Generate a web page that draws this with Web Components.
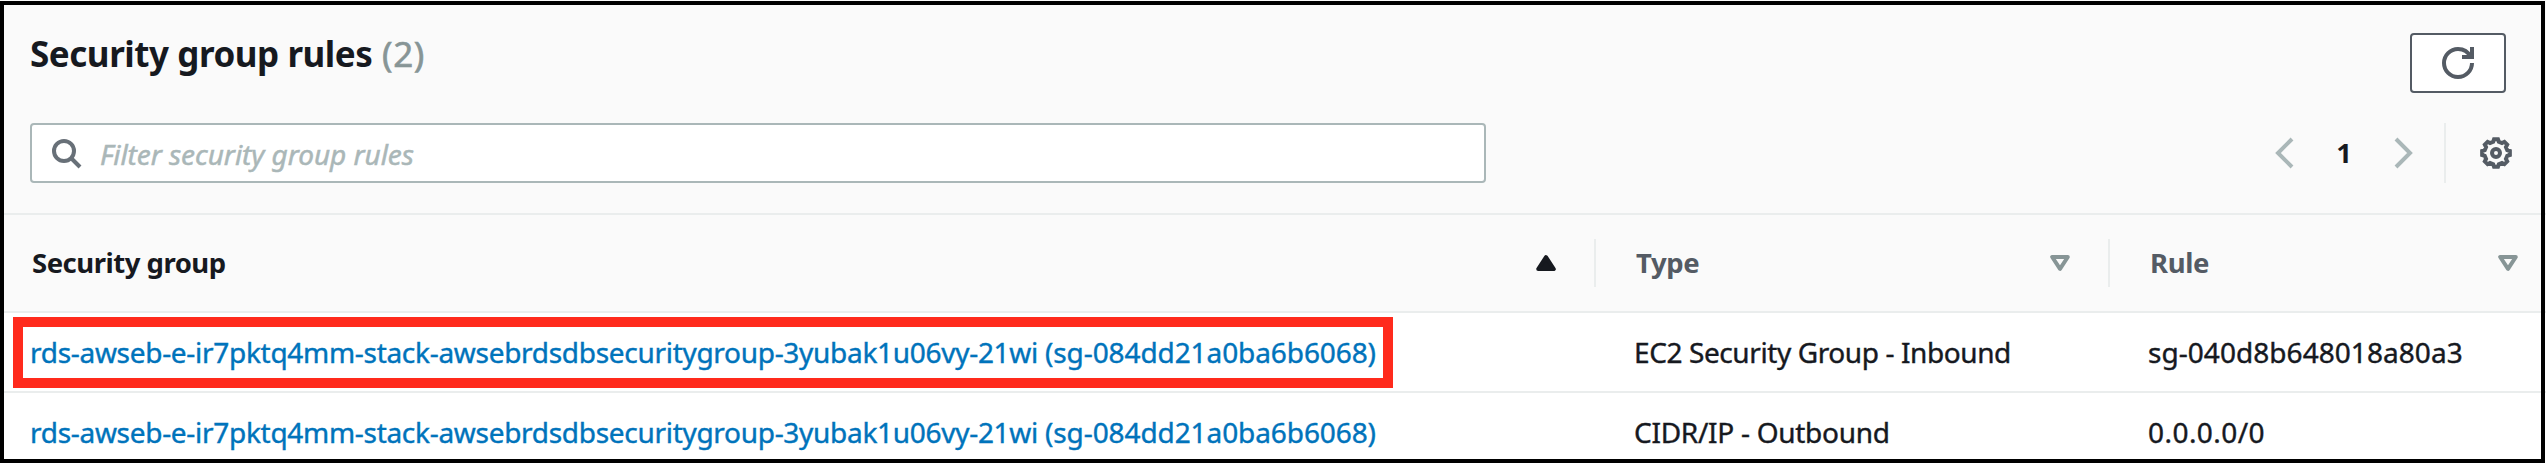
<!DOCTYPE html>
<html lang="en">
<head>
<meta charset="utf-8">
<title>Security group rules</title>
<style>
html,body{margin:0;height:100%}
body{position:relative;height:464px;overflow:hidden;background:#fff;color:#16191f;font:400 28px/34px "Noto Sans","Open Sans",sans-serif}
</style>
</head>
<body>
<rules-panel></rules-panel>
<outline-frame></outline-frame>

<script>
function define(name, html, setup) {
  const t = document.createElement('template');
  t.innerHTML = html;
  customElements.define(name, class extends HTMLElement {
    constructor() {
      super();
      this.attachShadow({mode: 'open'}).append(t.content.cloneNode(true));
    }
    connectedCallback() { if (setup) setup.call(this, this.shadowRoot); }
  });
}

/* Eight-toothed cog outline on a 16-unit grid */
function cog() {
  const p = (deg, r) => {
    const a = deg * Math.PI / 180;
    return (8 + r * Math.cos(a)).toFixed(2) + ' ' + (8 + r * Math.sin(a)).toFixed(2);
  };
  let pts = [];
  for (let k = 0; k < 360; k += 45) pts.push(p(k - 8, 7), p(k + 8, 7), p(k + 14, 5.8), p(k + 31, 5.8));
  return 'M' + pts.join('L') + 'Z';
}

const ICONS = {
  search: ['0 0 32 32', 32, 32, '<circle cx="14" cy="14" r="10" stroke-width="4"/><path d="M21 21l9 9" stroke-width="4"/>'],
  refresh: ['0 0 16 16', 32, 32, '<path d="M15 8c0 3.87-3.13 7-7 7s-7-3.13-7-7 3.13-7 7-7c2.79 0 5.2 1.63 6.33 4" stroke-width="2"/><path d="M10 5h5V0" stroke-width="2"/>'],
  previous: ['0 0 16 16', 32, 32, '<path d="M11 1L4 8l7 7" stroke-width="2"/>'],
  next: ['0 0 16 16', 32, 32, '<path d="M5 1l7 7-7 7" stroke-width="2"/>'],
  settings: ['0 0 16 16', 32, 32, '<path d="' + cog() + '" stroke-width="2"/><circle cx="8" cy="8" r="2" stroke-width="2"/>'],
  asc: ['0 0 20 16', 20, 16, '<path d="M10 2.2L17.8 14H2.2Z" fill="currentColor" stroke-width="4" stroke-linejoin="round"/>'],
  sortable: ['0 0 20 16', 20, 16, '<path d="M2.2 2H17.8L10 13.8Z" stroke-width="4" stroke-linejoin="round"/>']
};
define('ui-icon', '<style>:host{display:block;flex:none}svg{display:block}</style>', function (root) {
  const [box, w, h, body] = ICONS[this.getAttribute('name')];
  root.innerHTML += `<svg width="${w}" height="${h}" viewBox="${box}" fill="none" stroke="currentColor">${body}</svg>`;
});

define('icon-button', `<style>
:host{display:block;color:#545b64}
button{box-sizing:border-box;display:flex;align-items:center;justify-content:center;width:96px;height:60px;padding:0;background:#fff;border:2px solid #545b64;border-radius:4px;color:inherit}
</style><button aria-label="Refresh"><slot></slot></button>`);

define('filter-field', `<style>
:host{box-sizing:border-box;display:flex;align-items:center;width:1456px;height:60px;padding-left:18px;background:#fff;border:2px solid #aab7b8;border-radius:4px;color:#aab7b8}
ui-icon{color:#687078}
.hint{padding:1px 0 0 18px;font-style:italic;letter-spacing:-.06px;-webkit-text-stroke:.5px currentColor}
</style><ui-icon name="search"></ui-icon><span class="hint"><slot></slot></span>`);

define('page-controls', `<style>
:host{display:flex;align-items:center;height:60px;color:#aab7b8}
b{box-sizing:border-box;width:84px;text-align:center;color:#16191f;font-size:27.5px}
i{width:2px;height:60px;margin:0 34px 0 26px;background:#eaeded}
ui-icon[name=settings]{color:#545b64}
</style><ui-icon name="previous"></ui-icon><b>1</b><ui-icon name="next"></ui-icon><i></i><ui-icon name="settings"></ui-icon>`);

define('panel-header', `<style>
:host{box-sizing:border-box;display:flex;flex-direction:column;height:215px;padding:33px 34px 0 30px;background:#fafafa;border-bottom:2px solid #eaeded}
.top,.bar{display:flex;justify-content:space-between}
.top{height:90px;padding-right:6px}
h2{margin:0;font-size:35px;line-height:42px;font-weight:700;letter-spacing:-.46px;white-space:nowrap}
h2 span{font-weight:400;color:#879596;letter-spacing:.6px;margin-left:1px;-webkit-text-stroke:.6px currentColor}
</style>
<div class="top"><h2>Security group rules <span>(2)</span></h2><icon-button><ui-icon name="refresh"></ui-icon></icon-button></div>
<div class="bar"><filter-field>Filter security group rules</filter-field><page-controls></page-controls></div>`);

define('column-heading', `<style>
:host{box-sizing:border-box;display:flex;align-items:center;justify-content:space-between;height:48px;padding:0 38px 0 40px;border-right:2px solid #eaeded;color:#545b64;font-weight:700;font-size:27.5px;letter-spacing:-.35px}
:host([sorted]){padding-left:32px;color:#16191f;letter-spacing:-.49px}
:host([last]){padding-right:28px;border:0}
ui-icon{color:#879596}
:host([sorted]) ui-icon{color:#16191f}
</style><slot></slot>`, function (root) {
  const i = document.createElement('ui-icon');
  i.setAttribute('name', this.hasAttribute('sorted') ? 'asc' : 'sortable');
  root.append(i);
});

define('table-row', `<style>
:host{box-sizing:border-box;display:grid;grid-template-columns:1596px 514px 1fr;align-items:center;height:80px;background:#fff;border-bottom:2px solid #eaeded}
:host([head]){height:98px;background:#fafafa}
::slotted(*){white-space:nowrap}
</style><slot></slot>`);

define('table-cell', `<style>
:host{display:block;padding-left:38px;letter-spacing:var(--track,0);-webkit-text-stroke:.4px currentColor}
:host([link]){padding-left:30px;color:#0073bb}
</style><slot></slot>`);

define('group-link', `<style>
:host{display:inline}
a{color:inherit;letter-spacing:-.295px}
.id{letter-spacing:-.09px}
</style><a><slot></slot> <span class="id"><slot name="id"></slot></span></a>`);

define('highlight-box', `<style>
:host{position:absolute;box-sizing:border-box;left:13px;top:317px;width:1380px;height:71px;border:10px solid #ff2a1c;pointer-events:none}
</style>`);

define('outline-frame', `<style>
:host{position:absolute;box-sizing:border-box;left:0;top:1px;width:2545px;height:462px;border:4px solid #000;pointer-events:none}
</style>`);

define('rules-panel', `<style>
:host{display:block;height:464px;overflow:hidden}
</style>
<panel-header></panel-header>
<table-row head>
<column-heading sorted>Security group</column-heading><column-heading>Type</column-heading><column-heading last>Rule</column-heading>
</table-row>
<table-row>
<table-cell link><group-link>rds-awseb-e-ir7pktq4mm-stack-awsebrdsdbsecuritygroup-3yubak1u06vy-21wi<span slot="id">(sg-084dd21a0ba6b6068)</span></group-link></table-cell>
<table-cell style="--track:-.4px">EC2 Security Group - Inbound</table-cell>
<table-cell style="--track:.05px">sg-040d8b648018a80a3</table-cell>
</table-row>
<table-row>
<table-cell link><group-link>rds-awseb-e-ir7pktq4mm-stack-awsebrdsdbsecuritygroup-3yubak1u06vy-21wi<span slot="id">(sg-084dd21a0ba6b6068)</span></group-link></table-cell>
<table-cell style="--track:-.28px">CIDR/IP - Outbound</table-cell>
<table-cell style="--track:.45px">0.0.0.0/0</table-cell>
</table-row>
<highlight-box></highlight-box>`);
</script>
</body>
</html>
